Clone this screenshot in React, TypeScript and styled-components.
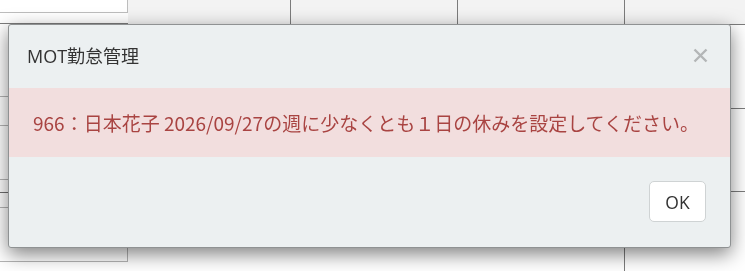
import React from "react";
import styled, { createGlobalStyle } from "styled-components";

const Global = createGlobalStyle`
  html, body { margin: 0; padding: 0; background: #ffffff; }
  body { font-family: "Open Sans", "Noto Sans CJK JP", sans-serif; }
  * { box-sizing: border-box; }
`;

const Sheet = styled.div`
  display: flex;
  width: 745px;
  height: 271px;
  overflow: hidden;
  background: #ffffff;
`;

const Column = styled.div<{ $w: number; $edge?: string }>`
  display: flex;
  flex-direction: column;
  flex: 0 0 ${(p) => p.$w}px;
  ${(p) => (p.$edge ? `border-right: 1px solid ${p.$edge};` : "")}
`;

const HeadCell = styled.div<{ $edge?: string }>`
  height: 25px;
  flex: 0 0 25px;
  background: #f3f3f3;
  border-bottom: 1px solid #7c7c7c;
  ${(p) => (p.$edge ? `border-right: 1px solid ${p.$edge};` : "")}
`;

const InputBox = styled.div`
  height: 13px;
  background: #ffffff;
  border-right: 1px solid #bdbdbd;
  border-bottom: 1px solid #bdbdbd;
`;

const Cell = styled.div<{ $h: number; $line: string; $edge?: string }>`
  flex: 0 0 ${(p) => p.$h}px;
  border-bottom: 1px solid ${(p) => p.$line};
  ${(p) => (p.$edge ? `border-right: 1px solid ${p.$edge};` : "")}
`;

const Overlay = styled.div`
  position: fixed;
  inset: 0;
  display: flex;
  align-items: flex-start;
  padding: 24px 0 0 8px;
`;

const Dialog = styled.div`
  width: 723px;
  height: 224px;
  display: flex;
  flex-direction: column;
  background: #ecf0f1;
  border: 1px solid #8f9293;
  border-radius: 3px;
  box-shadow: 0 6px 19px rgba(0, 0, 0, 0.5);
  overflow: hidden;
`;

const Header = styled.div`
  height: 63px;
  flex: 0 0 63px;
  display: flex;
  align-items: center;
  justify-content: space-between;
  padding: 0 22px 0 18px;
`;

const Title = styled.h4`
  margin: 0;
  font-family: "Open Sans", "Noto Sans CJK JP", sans-serif;
  font-size: 18px;
  font-weight: 400;
  line-height: 25px;
  color: #333333;
`;

const Close = styled.button`
  width: 15px;
  height: 15px;
  padding: 0;
  border: 0;
  background: transparent;
  display: flex;
  cursor: pointer;
  margin-top: -3px;
`;

const Alert = styled.div`
  height: 69px;
  flex: 0 0 69px;
  display: flex;
  align-items: center;
  padding: 0 24px;
  background: #f2dede;
  color: #a94442;
  font-family: "Noto Sans CJK JP", sans-serif;
  font-size: 19px;
  line-height: 25px;
  white-space: nowrap;
`;

const Footer = styled.div`
  flex: 1;
  display: flex;
  justify-content: flex-end;
  align-items: flex-start;
  padding: 24px 24px 0 0;
`;

const OkButton = styled.button`
  width: 57px;
  height: 41px;
  background: #ffffff;
  border: 1px solid #cfd3d4;
  border-radius: 5px;
  color: #333333;
  font-family: "Open Sans", sans-serif;
  font-size: 17.5px;
  padding: 0;
  cursor: pointer;
`;

const CloseIcon = () => (
  <svg width="15" height="15" viewBox="0 0 15 15">
    <path d="M1.5 1.5 L13.5 13.5 M13.5 1.5 L1.5 13.5" stroke="#b3b6b7" strokeWidth="2.4" strokeLinecap="butt" />
  </svg>
);

export default function App() {
  return (
    <>
      <Global />
      <Sheet>
        <Column $w={128}>
          <InputBox />
          <Cell $h={11} $line="#7c7c7c" />
          <Cell $h={73} $line="#b5b5b5" />
          <Cell $h={29} $line="#b5b5b5" />
          <Cell $h={54} $line="#b5b5b5" />
          <Cell $h={13} $line="#6f6f6f" />
          <Cell $h={15} $line="#b5b5b5" />
          <Cell $h={54} $line="#b5b5b5" $edge="#b5b5b5" />
        </Column>
        <Column $w={163}>
          <HeadCell $edge="#7c7c7c" />
        </Column>
        <Column $w={167}>
          <HeadCell $edge="#7c7c7c" />
        </Column>
        <Column $w={167} $edge="#7c7c7c">
          <HeadCell />
        </Column>
        <Column $w={120}>
          <HeadCell />
          <Cell $h={84} $line="#7c7c7c" />
          <Cell $h={83} $line="#7c7c7c" />
        </Column>
      </Sheet>
      <Overlay>
        <Dialog role="dialog">
          <Header>
            <Title>MOT勤怠管理</Title>
            <Close aria-label="close">
              <CloseIcon />
            </Close>
          </Header>
          <Alert>966：日本花子 2026/09/27の週に少なくとも１日の休みを設定してください。</Alert>
          <Footer>
            <OkButton>OK</OkButton>
          </Footer>
        </Dialog>
      </Overlay>
    </>
  );
}
